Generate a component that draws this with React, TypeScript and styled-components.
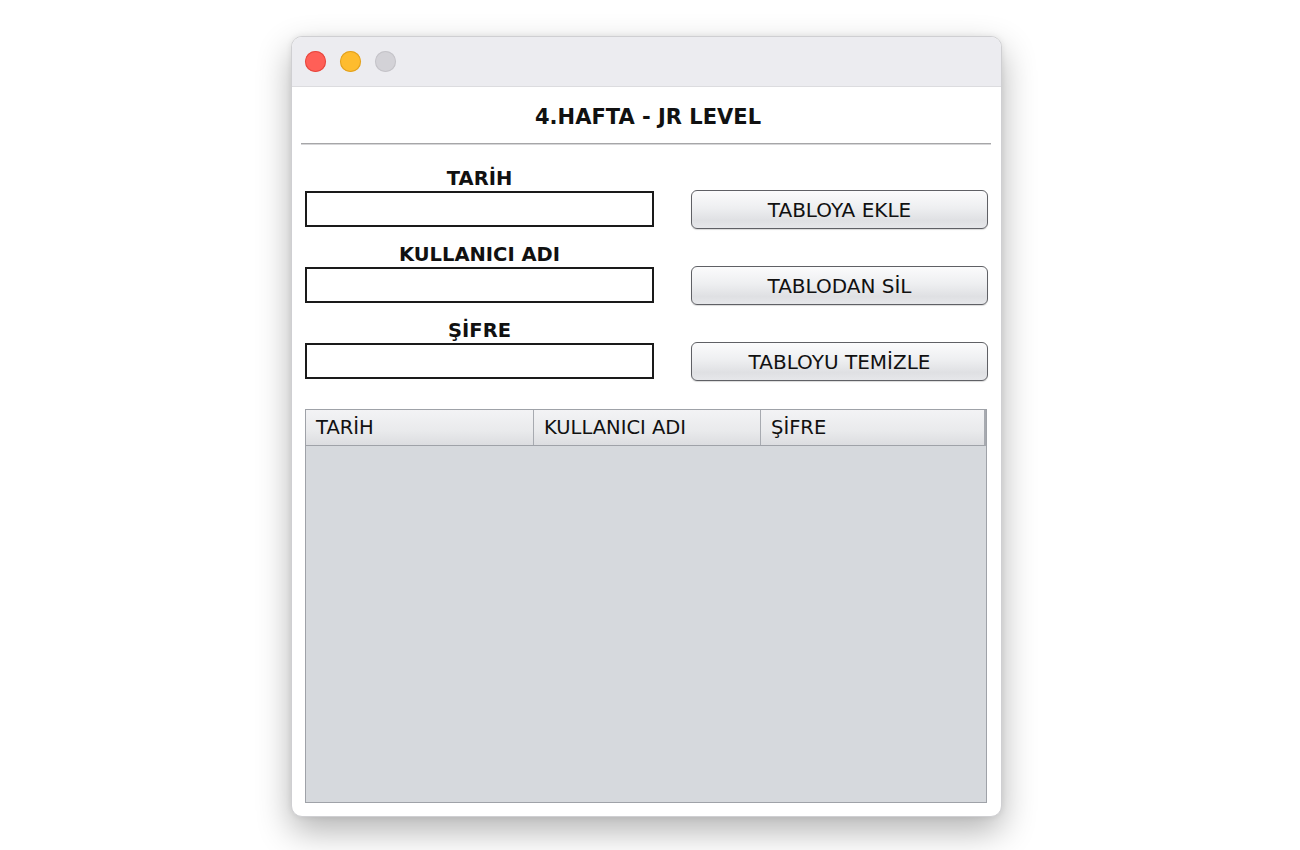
import React from "react";
import styled, { createGlobalStyle } from "styled-components";

const Global = createGlobalStyle`
  html, body { margin: 0; padding: 0; background: #ffffff; }
  body { font-family: "DejaVu Sans", Verdana, sans-serif; }
`;

const Page = styled.div`
  width: 1300px;
  height: 850px;
  padding: 36px 0 0 291px;
  box-sizing: border-box;
`;

const Window = styled.div`
  width: 711px;
  height: 781px;
  box-sizing: border-box;
  border-radius: 11px;
  border: 1px solid #cfcfd2;
  background: #ffffff;
  overflow: hidden;
  box-shadow: 0 14px 34px rgba(0, 0, 0, 0.3), 0 0 6px rgba(0, 0, 0, 0.08);
  display: flex;
  flex-direction: column;
`;

const TitleBar = styled.div`
  height: 49px;
  flex: none;
  background: #ececf0;
  border-bottom: 1px solid #dcdcdf;
  display: flex;
  align-items: center;
  padding-left: 13px;
  gap: 14px;
`;

const Light = styled.span<{ $fill: string; $edge: string }>`
  width: 21px;
  height: 21px;
  border-radius: 50%;
  background: ${(p) => p.$fill};
  box-shadow: inset 0 0 0 1px ${(p) => p.$edge};
`;

const Content = styled.div`
  flex: 1;
  display: flex;
  flex-direction: column;
  padding: 0 10px 13px 9px;
`;

const Heading = styled.div`
  height: 56px;
  display: flex;
  align-items: center;
  justify-content: center;
  font-weight: bold;
  font-size: 21px;
  color: #111;
  padding-left: 4px;
  padding-top: 3px;
  box-sizing: border-box;
`;

const Divider = styled.div`
  height: 1px;
  background: #a6a6a8;
  border-bottom: 1px solid #d6d6d8;
`;

const Form = styled.div`
  display: flex;
  flex-direction: column;
  gap: 16px;
  padding: 22px 3px 0 4px;
`;

const FormRow = styled.div`
  display: flex;
  align-items: flex-end;
  justify-content: space-between;
`;

const Field = styled.div`
  width: 349px;
  display: flex;
  flex-direction: column;
`;

const Label = styled.div`
  height: 24px;
  line-height: 24px;
  text-align: center;
  font-weight: bold;
  font-size: 19.5px;
  color: #111;
`;

const Input = styled.div`
  height: 36px;
  box-sizing: border-box;
  border: 2px solid #1a1a1a;
  background: #fff;
`;

const Button = styled.div`
  width: 297px;
  height: 39px;
  box-sizing: border-box;
  margin-bottom: -2px;
  border: 1px solid #5f6065;
  border-radius: 6px;
  background: linear-gradient(#fbfbfc 0%, #eeeff1 45%, #dfe0e3 80%, #e6e7ea 100%);
  box-shadow: 0 1px 1px rgba(0, 0, 0, 0.15);
  display: flex;
  align-items: center;
  justify-content: center;
  font-size: 20px;
  color: #111;
`;

const Table = styled.div`
  margin: 30px 4px 0 4px;
  flex: 1;
  border: 1px solid #9fa2a8;
  background: #d6d9dd;
  display: flex;
  flex-direction: column;
`;

const HeaderRow = styled.div`
  height: 35px;
  display: grid;
  grid-template-columns: 227px 227px 1fr;
  border-bottom: 1px solid #9fa2a8;
  border-right: 2px solid #a7aab0;
  background: linear-gradient(#f3f3f5 0%, #e9eaec 60%, #dcdde0 100%);
`;

const HeaderCell = styled.div`
  display: flex;
  align-items: center;
  padding-left: 10px;
  font-size: 19.5px;
  color: #111;
  & + & {
    border-left: 1px solid #a7aab0;
  }
`;

export default function App() {
  const rows = [
    { label: "TARİH", button: "TABLOYA EKLE" },
    { label: "KULLANICI ADI", button: "TABLODAN SİL" },
    { label: "ŞİFRE", button: "TABLOYU TEMİZLE" },
  ];
  return (
    <Page>
      <Global />
      <Window>
        <TitleBar>
          <Light $fill="#ff5f57" $edge="#e5483f" />
          <Light $fill="#febc2e" $edge="#e0a020" />
          <Light $fill="#d3d2d7" $edge="#c4c3c8" />
        </TitleBar>
        <Content>
          <Heading>4.HAFTA - JR LEVEL</Heading>
          <Divider />
          <Form>
            {rows.map((r) => (
              <FormRow key={r.label}>
                <Field>
                  <Label>{r.label}</Label>
                  <Input />
                </Field>
                <Button>{r.button}</Button>
              </FormRow>
            ))}
          </Form>
          <Table>
            <HeaderRow>
              <HeaderCell>TARİH</HeaderCell>
              <HeaderCell>KULLANICI ADI</HeaderCell>
              <HeaderCell>ŞİFRE</HeaderCell>
            </HeaderRow>
          </Table>
        </Content>
      </Window>
    </Page>
  );
}
